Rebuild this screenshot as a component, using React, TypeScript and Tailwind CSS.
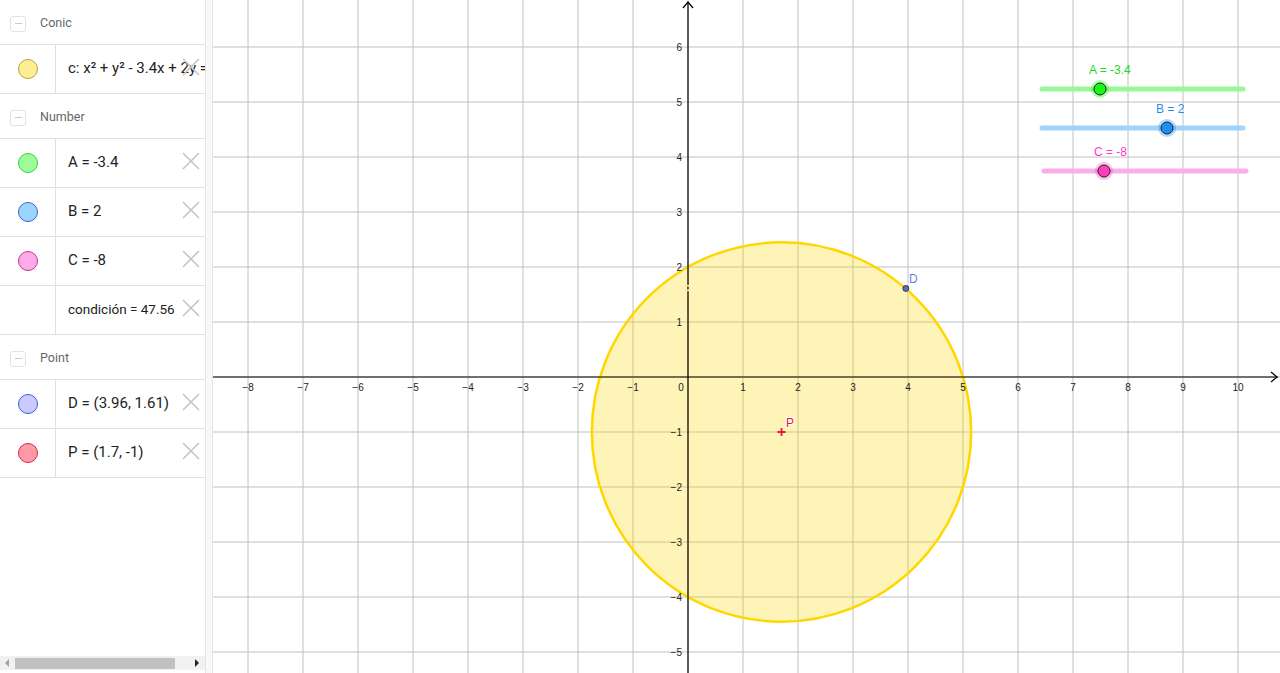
import React from 'react';

type Item = {
  label: string;
  fill?: string;
  border?: string;
  small?: boolean;
};

type Group = { title: string; items: Item[] };

const groups: Group[] = [
  {
    title: 'Conic',
    items: [{ label: 'c: x² + y² - 3.4x + 2y = 8', fill: '#fdee94', border: '#b9a23c' }],
  },
  {
    title: 'Number',
    items: [
      { label: 'A = -3.4', fill: '#9cfc9c', border: '#2fd62f' },
      { label: 'B = 2', fill: '#9dd3ff', border: '#3566c9' },
      { label: 'C = -8', fill: '#ffaaea', border: '#c4358f' },
      { label: 'condición = 47.56', small: true },
    ],
  },
  {
    title: 'Point',
    items: [
      { label: 'D = (3.96, 1.61)', fill: '#c9cbff', border: '#3c5fd0' },
      { label: 'P = (1.7, -1)', fill: '#ff98a8', border: '#dd2643' },
    ],
  },
];

function CloseIcon() {
  return (
    <svg width="18" height="18" viewBox="0 0 18 18" className="block">
      <path d="M1 1 L17 17 M17 1 L1 17" stroke="#c4c4c4" strokeWidth="1.6" fill="none" />
    </svg>
  );
}

function AlgebraView() {
  return (
    <div className="relative h-full w-[205px] shrink-0 overflow-hidden bg-white">
      {groups.map((g) => (
        <div key={g.title}>
          <div className="flex h-[45px] items-center border-b border-[#e0e0e0] pt-[3px]">
            <div className="ml-[10px] flex h-[16px] w-[16px] items-center justify-center rounded-[3px] border border-[#e2e2e2]">
              <div className="h-[1.5px] w-[7px] bg-[#c8c8c8]" />
            </div>
            <span className="ml-[14px] text-[12.5px] text-[#666]">{g.title}</span>
          </div>
          {g.items.map((it) => (
            <div key={it.label} className="relative flex h-[49px] border-b border-[#e0e0e0]">
              <div className="flex w-[56px] shrink-0 items-center justify-center border-r border-[#e0e0e0]">
                {it.fill ? (
                  <div
                    className="h-[20px] w-[20px] rounded-full border"
                    style={{ background: it.fill, borderColor: it.border }}
                  />
                ) : null}
              </div>
              <div className="flex min-w-0 flex-1 items-center overflow-hidden whitespace-nowrap pl-[12px] pb-[2px]">
                <span className={`${it.small ? 'text-[13.5px]' : 'text-[15px]'} text-[#222]`}>{it.label}</span>
              </div>
              <div className="absolute left-[182px] top-[13px]">
                <CloseIcon />
              </div>
            </div>
          ))}
        </div>
      ))}
      <div className="absolute bottom-[3px] left-0 flex h-[14px] w-full items-center bg-[#f1f1f1]">
        <svg width="15" height="14" viewBox="0 0 15 14" className="block">
          <path d="M9 3 L5 7 L9 11 Z" fill="#a3a3a3" />
        </svg>
        <div className="h-[11px] w-[160px] bg-[#c1c1c1]" />
        <div className="flex-1" />
        <svg width="15" height="14" viewBox="0 0 15 14" className="block">
          <path d="M5 3 L9 7 L5 11 Z" fill="#222" />
        </svg>
      </div>
    </div>
  );
}

const OX = 688;
const OY = 377;
const U = 55;
const px = (x: number) => OX + x * U;
const py = (y: number) => OY - y * U;

function Slider({
  y,
  x1,
  x2,
  knob,
  line,
  color,
  text,
  label,
  labelX,
}: {
  y: number;
  x1: number;
  x2: number;
  knob: number;
  line: string;
  color: string;
  text: string;
  label: string;
  labelX: number;
}) {
  return (
    <g>
      <line x1={x1} y1={y} x2={x2} y2={y} stroke={line} strokeWidth="5" strokeLinecap="round" />
      <circle cx={knob} cy={y} r="9" fill={color} opacity="0.35" />
      <circle cx={knob} cy={y} r="6" fill={color} stroke="#222" strokeWidth="1" />
      <text x={labelX} y={y - 15} fill={text} fontSize="12">
        {label}
      </text>
    </g>
  );
}

function GraphicsView() {
  const vlines: number[] = [];
  for (let k = -8; k <= 10; k++) vlines.push(k);
  const hlines: number[] = [];
  for (let k = -5; k <= 6; k++) hlines.push(k);
  const r = Math.sqrt(1.7 * 1.7 + 1 + 8) * U;

  return (
    <div className="relative h-full flex-1 overflow-hidden bg-white">
      <svg width="1067" height="673" viewBox="213 0 1067 673" className="block" style={{ fontFamily: '"Liberation Sans", Arial, sans-serif' }}>
        <rect x="213" y="0" width="1067" height="673" fill="#fff" />
        {vlines.map((k) => (
          <line key={'v' + k} x1={px(k)} y1={0} x2={px(k)} y2={673} stroke="#c0c0c0" strokeWidth="1" />
        ))}
        {hlines.map((k) => (
          <line key={'h' + k} x1={213} y1={py(k)} x2={1280} y2={py(k)} stroke="#c0c0c0" strokeWidth="1" />
        ))}
        {/* circle c */}
        <circle cx={px(1.7)} cy={py(-1)} r={r} fill="#ffd700" fillOpacity="0.28" stroke="#ffd700" strokeWidth="2.5" />
        {/* axes */}
        <line x1={213} y1={OY} x2={1278} y2={OY} stroke="#000" strokeWidth="1.2" />
        <path d="M1271 372 L1277 377 L1271 382" stroke="#000" strokeWidth="1.2" fill="none" />
        <line x1={OX} y1={2} x2={OX} y2={673} stroke="#000" strokeWidth="1.2" />
        <path d="M683 8 L688 2 L693 8" stroke="#000" strokeWidth="1.2" fill="none" />
        {vlines
          .filter((k) => k !== 0)
          .map((k) => (
            <text key={'xl' + k} x={px(k)} y={OY + 14} fontSize="10" fill="#222" textAnchor="middle">
              {k < 0 ? '\u2212' + -k : k}
            </text>
          ))}
        <text x={OX - 7} y={OY + 14} fontSize="10" fill="#222" textAnchor="middle">
          0
        </text>
        {hlines
          .filter((k) => k !== 0)
          .map((k) => (
            <text key={'yl' + k} x={OX - 6} y={py(k) + 4} fontSize="10" fill="#222" textAnchor="end">
              {k < 0 ? '\u2212' + -k : k}
            </text>
          ))}
        <text x={OX - 3} y={291} fontSize="10" fill="#fff" stroke="#ffd700" strokeWidth="0.6" paintOrder="stroke">
          c
        </text>
        {/* point D */}
        <circle cx={px(3.96)} cy={py(1.61)} r="3" fill="#5a6fc4" stroke="#222" strokeWidth="0.8" />
        <text x={909} y={283} fontSize="12" fill="#6b80d9">
          D
        </text>
        {/* point P */}
        <path
          d={`M${px(1.7) - 4} ${py(-1)} L${px(1.7) + 4} ${py(-1)} M${px(1.7)} ${py(-1) - 4} L${px(1.7)} ${py(-1) + 4}`}
          stroke="#e8163c"
          strokeWidth="1.8"
        />
        <text x={786} y={427} fontSize="12" fill="#e8163c" stroke="#fff" strokeWidth="2" paintOrder="stroke">
          P
        </text>
        {/* sliders */}
        <Slider y={89} x1={1042} x2={1243} knob={1100} line="#99f799" color="#1bf51b" text="#1fd81f" label="A = -3.4" labelX={1089} />
        <Slider y={128} x1={1042} x2={1243} knob={1167} line="#9fd4fc" color="#1c8ff2" text="#1c8ff2" label="B = 2" labelX={1156} />
        <Slider y={171} x1={1044} x2={1246} knob={1104} line="#fcaee8" color="#ff3cc0" text="#ff3cc0" label="C = -8" labelX={1094} />
      </svg>
    </div>
  );
}

export default function App() {
  return (
    <div className="flex h-[673px] w-[1280px] overflow-hidden bg-white" style={{ fontFamily: 'Roboto, "Liberation Sans", Arial, sans-serif' }}>
      <AlgebraView />
      <div className="h-full w-[8px] shrink-0 border-x border-[#e4e4e4] bg-[#f8f8f8]" />
      <GraphicsView />
    </div>
  );
}
